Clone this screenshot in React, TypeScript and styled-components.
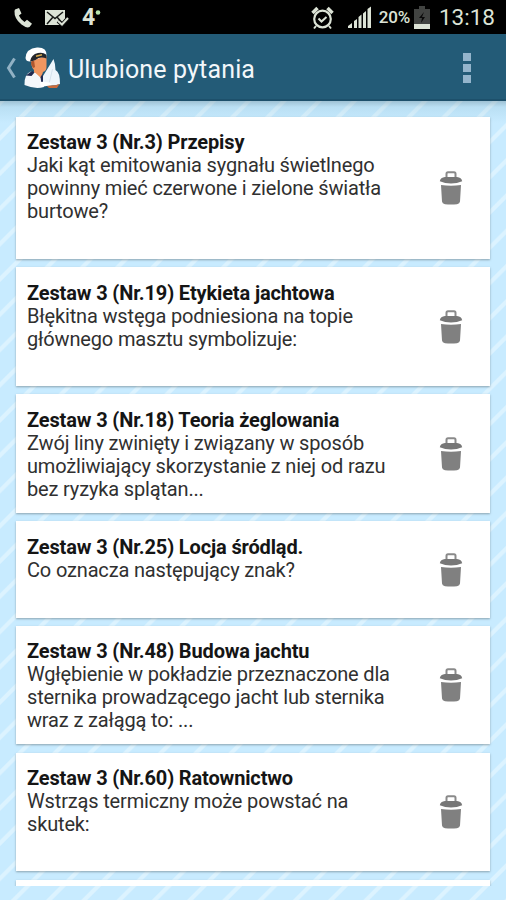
import React from "react";
import styled, { createGlobalStyle } from "styled-components";

const Global = createGlobalStyle`
  * { box-sizing: border-box; }
  body { margin: 0; background: #c8ebff; font-family: Roboto, "Noto Sans", sans-serif; }
`;

const Screen = styled.div`
  width: 506px;
  height: 900px;
  overflow: hidden;
  display: flex;
  flex-direction: column;
  background: repeating-linear-gradient(
    135deg,
    #d4efff 0,
    #c8ebff 0.6px 20.2px,
    #dcf3ff 21.4px 24.2px,
    #d4efff 24.93px
  );
`;

const StatusBar = styled.header`
  flex: none;
  height: 34px;
  background: #000;
  color: #dce3d6;
  display: flex;
  align-items: center;
  padding: 1px 11px 0 12px;
`;

const StatusIcon = styled.svg<{ $gap: number }>`
  display: block;
  flex: none;
  margin-left: ${(p) => p.$gap}px;
`;

const StatusText = styled.span<{ $size: number; $weight?: number; $gap: number; $spacing?: number }>`
  font-size: ${(p) => p.$size}px;
  font-weight: ${(p) => p.$weight ?? 400};
  margin-left: ${(p) => p.$gap}px;
  letter-spacing: ${(p) => p.$spacing ?? 0}px;
  line-height: 33px;
  white-space: nowrap;
`;

const Spacer = styled.div`
  flex: 1;
`;

const ActionBar = styled.nav`
  flex: none;
  height: 67px;
  background: #235b77;
  border-bottom: 2px solid #1d506b;
  display: flex;
  align-items: center;
  padding: 2px 35px 0 6px;
`;

const SailorIcon = styled.svg`
  display: block;
  flex: none;
  margin: 0 0 0 7px;
`;

const Title = styled.h1`
  margin: 4px 0 0 6px;
  font-size: 25px;
  font-weight: 400;
  line-height: 30px;
  letter-spacing: 0.15px;
  color: #f2f7fa;
  white-space: nowrap;
`;

const Overflow = styled.button`
  border: 0;
  padding: 0;
  background: none;
  display: grid;
  gap: 3px;
  margin-left: auto;
`;

const Dot = styled.i`
  width: 8px;
  height: 8px;
  background: #94b5cc;
`;

const List = styled.main`
  flex: none;
  height: 785px;
  overflow: hidden;
  display: flex;
  flex-direction: column;
  gap: 8px;
  padding: 16px 16px 0;
  background: linear-gradient(rgba(80, 115, 130, 0.35), rgba(120, 170, 190, 0.18) 6px, transparent 22px);
`;

const Card = styled.article<{ $height: number; $after?: number }>`
  flex: none;
  height: ${(p) => p.$height}px;
  margin-bottom: ${(p) => p.$after ?? 0}px;
  background: #fff;
  box-shadow: 0 1px 2px rgba(90, 105, 110, 0.55);
  display: flex;
  align-items: center;
  justify-content: space-between;
  padding: 0 27px 0 11px;
`;

const CardText = styled.div<{ $top: number }>`
  align-self: flex-start;
  padding-top: ${(p) => p.$top}px;
  font-size: 20px;
  line-height: 23px;
  white-space: nowrap;
`;

const CardTitle = styled.h2`
  margin: 0;
  font-size: inherit;
  font-weight: 700;
  letter-spacing: -0.14px;
  color: #151515;
`;

const Line = styled.div`
  color: #303030;
  letter-spacing: -0.16px;
`;

type Row = { height: number; top: number; after?: number; title: string; lines: string[] };

const rows: Row[] = [
  {
    height: 142,
    top: 14,
    title: "Zestaw 3 (Nr.3) Przepisy",
    lines: ["Jaki kąt emitowania sygnału świetlnego", "powinny mieć czerwone i zielone światła", "burtowe?"],
  },
  {
    height: 119,
    top: 15,
    title: "Zestaw 3 (Nr.19) Etykieta jachtowa",
    lines: ["Błękitna wstęga podniesiona na topie", "głównego masztu symbolizuje:"],
  },
  {
    height: 119,
    top: 15,
    title: "Zestaw 3 (Nr.18) Teoria żeglowania",
    lines: ["Zwój liny zwinięty i związany w sposób", "umożliwiający skorzystanie z niej od razu", "bez ryzyka splątan..."],
  },
  {
    height: 97,
    top: 15,
    title: "Zestaw 3 (Nr.25) Locja śródląd.",
    lines: ["Co oznacza następujący znak?"],
  },
  {
    height: 118,
    top: 14,
    after: 1,
    title: "Zestaw 3 (Nr.48) Budowa jachtu",
    lines: ["Wgłębienie w pokładzie przeznaczone dla", "sternika prowadzącego jacht lub sternika", "wraz z załągą to: ..."],
  },
  {
    height: 118,
    top: 14,
    after: 1,
    title: "Zestaw 3 (Nr.60) Ratownictwo",
    lines: ["Wstrząs termiczny może powstać na", "skutek:"],
  },
];

const Trash = () => (
  <svg width="24" height="34" viewBox="0 0 24 34">
    <path d="M7.500 6.500V2.800Q7.500 1.300 9 1.300h6q1.500 0 1.500 1.500v3.700" fill="none" stroke="#8a8a8a" strokeWidth="2" />
    <path d="M.8 10.200Q1.500 6.300 6 5.900h12q4.500.4 5.200 4.300Q18 12.500 12 12.500T.8 10.200z" fill="#777" />
    <path d="M2 14q10 1.600 20 0l-1 16.500q-.2 2.300-3 2.700-6 .6-12 0-2.800-.4-3-2.700z" fill="#808080" />
  </svg>
);

const Sailor = () => (
  <SailorIcon width="38" height="44" viewBox="0 0 38 44">
    <path d="M8 12Q6 20 10 24v4l7 4 2-6q3.500-1 3.500-5V10z" fill="#f09660" />
    <path d="M7 14q-.5 5 2.500 8l1.500-1-1-7z" fill="#b0562d" />
    <path d="M1.500 12Q2 2.500 13 1.500q10-.5 9.500 8L7 15.500Q2 16 1.500 12z" fill="#fff" />
    <path d="M6 15.500Q7 8.500 14 7q5-1 8 1.500l.5 4q-6-2.500-11 1.500-3 1-5.500 1.500z" fill="#24262b" />
    <path d="M12 10.200l6-1.500" stroke="#d9ab4e" strokeWidth="1.600" />
    <path d="M.5 39Q0 28 7 25.500l4.500 1.500 5.500 5 1-3 2 12q-9 2.500-19.500-2z" fill="#f4f7fb" />
    <path d="M1.800 29.500L8 25l2.500 1.500-3 3.500zM16.500 31l2-3 1.500 8-2.500 2z" fill="#202a50" />
    <path d="M29.500 13L19 30v8q8 3 17 0 0-12-4.500-14 0-6-2-11z" fill="#eef5fb" />
    <path d="M28.500 23l-3 13" fill="none" stroke="#cbdae6" strokeWidth=".7" />
    <path d="M22 39q7 1.500 13.500-1L33 42h-8z" fill="#c96a3c" />
    <path d="M16 36q8-1 12 3l-11 2z" fill="#fff" />
  </SailorIcon>
);

export default function App() {
  return (
    <>
      <Global />
      <Screen>
        <StatusBar>
          <StatusIcon $gap={1} width="20" height="22" viewBox="0 0 20 22">
            <path d="M2 2.500L6 1l2.500 5.500-2.600 2q2 4.500 5.600 6.500l2.500-2.200 5 4-2.500 3.300q-3 1.400-8-2.500Q1 11.500 1.500 4z" fill="#dce3d6" />
          </StatusIcon>
          <StatusIcon $gap={12} width="25" height="18" viewBox="0 0 25 18">
            <path d="M0 1h20v9l-4 6H0z" fill="#dce3d6" />
            <path d="M2 3l8 6.500L18 3M2 15l6-7M18 15l-6-7" fill="none" stroke="#161816" strokeWidth="1.500" />
            <path d="M13 12l4 3.500L23 9" fill="none" stroke="#111" strokeWidth="4" />
            <path d="M13 12l4 3.500L23 9" fill="none" stroke="#dce3d6" strokeWidth="2" />
          </StatusIcon>
          <StatusText $gap={12} $size={23} $weight={700}>4</StatusText>
          <StatusIcon $gap={0} width="6" height="18" viewBox="0 0 6 18">
            <circle cx="3" cy="3.500" r="2.300" fill="#b8e4ac" />
          </StatusIcon>
          <Spacer />
          <StatusIcon $gap={0} width="23" height="24" viewBox="0 0 23 24" fill="none" stroke="#dce3d6">
            <circle cx="11.500" cy="13" r="8.300" strokeWidth="2.200" />
            <path d="M7.500 12.500l3 3 5-4.500" strokeWidth="2" />
            <path d="M1.500 7l5-5M21.500 7l-5-5" strokeWidth="3.500" />
            <path d="M5 20l-2 2.500M18 20l2 2.500" strokeWidth="2" />
          </StatusIcon>
          <StatusIcon $gap={14} width="24" height="23" viewBox="0 0 24 23" fill="#dce3d6">
            <path d="M0 22v-2l4-3v5zM6 22v-7l3-2v9zM10.500 22V11l3-2.500V22zM15 22V7.500L18 5v17zM19.500 22V3L23 .5V22z" />
          </StatusIcon>
          <StatusText $gap={7} $size={17} $weight={500} $spacing={-0.2}>20%</StatusText>
          <StatusIcon $gap={4} width="16" height="24" viewBox="0 0 16 24">
            <path d="M0 3h5V0h6v3h5v20H0z" fill="#414341" />
            <path d="M10 6l-5 6h3l-1 5 4-6H8z" fill="#090909" />
            <path d="M0 18h16v5H0z" fill="#dce3d6" />
          </StatusIcon>
          <StatusText $gap={9} $size={22.500}>13:18</StatusText>
        </StatusBar>
        <ActionBar>
          <StatusIcon $gap={0} width="11" height="22" viewBox="0 0 11 22">
            <path d="M8.500 1.500Q5 7 2.500 11 5 15 8.500 20.500" fill="none" stroke="#91b1c4" strokeWidth="3" />
          </StatusIcon>
          <Sailor />
          <Title>Ulubione pytania</Title>
          <Overflow aria-label="Menu">
            <Dot />
            <Dot />
            <Dot />
          </Overflow>
        </ActionBar>
        <List>
          {rows.map((row) => (
            <Card key={row.title} $height={row.height} $after={row.after}>
              <CardText $top={row.top}>
                <CardTitle>{row.title}</CardTitle>
                {row.lines.map((text) => (
                  <Line key={text}>{text}</Line>
                ))}
              </CardText>
              <Trash />
            </Card>
          ))}
          <Card $height={40} />
        </List>
      </Screen>
    </>
  );
}
